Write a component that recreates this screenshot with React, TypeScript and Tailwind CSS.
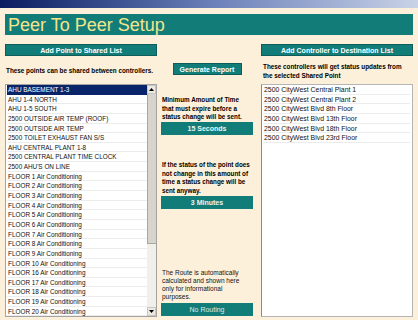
import React from "react";

const leftItems = [
  "AHU BASEMENT 1-3",
  "AHU 1-4 NORTH",
  "AHU 1-5 SOUTH",
  "2500 OUTSIDE AIR TEMP (ROOF)",
  "2500 OUTSIDE AIR TEMP",
  "2500 TOILET EXHAUST FAN S/S",
  "AHU CENTRAL PLANT 1-8",
  "2500 CENTRAL PLANT TIME CLOCK",
  "2500 AHU'S ON LINE",
  "FLOOR 1 Air Conditioning",
  "FLOOR 2 Air Conditioning",
  "FLOOR 3 Air Conditioning",
  "FLOOR 4 Air Conditioning",
  "FLOOR 5 Air Conditioning",
  "FLOOR 6 Air Conditioning",
  "FLOOR 7 Air Conditioning",
  "FLOOR 8 Air Conditioning",
  "FLOOR 9 Air Conditioning",
  "FLOOR 10 Air Conditioning",
  "FLOOR 16 Air Conditioning",
  "FLOOR 17 Air Conditioning",
  "FLOOR 18 Air Conditioning",
  "FLOOR 19 Air Conditioning",
  "FLOOR 20 Air Conditioning",
];

const rightItems = [
  "2500 CityWest Central Plant 1",
  "2500 CityWest Central Plant 2",
  "2500 CityWest Blvd 8th Floor",
  "2500 CityWest Blvd 13th Floor",
  "2500 CityWest Blvd 18th Floor",
  "2500 CityWest Blvd 23rd Floor",
];

function Arrow({ up }: { up: boolean }) {
  return (
    <div className="h-[9px] w-full bg-[#ece9e2] border border-[#c9c6be] flex items-center justify-center">
      <svg width="5" height="3" viewBox="0 0 5 3">
        {up ? <polygon points="0,3 5,3 2.5,0" fill="#000" /> : <polygon points="0,0 5,0 2.5,3" fill="#000" />}
      </svg>
    </div>
  );
}

export default function App() {
  return (
    <div className="w-[418px] h-[320px] overflow-hidden bg-[#fdf0da] font-['Liberation_Sans',Arial,sans-serif]">
      <div className="h-[8px] bg-gradient-to-r from-[#0c1c60] via-[#6a7fb8] to-[#c9d2e6]" />
      <div className="px-[5px]">
        <div className="mt-[6px] h-[21px] bg-[#127c78] flex items-center pl-[3px]">
          <span className="text-[18px] leading-none text-[#f3e58c]">Peer To Peer Setup</span>
        </div>
        <div className="mt-[9px] h-[274px] flex">
          {/* Left column */}
          <div className="w-[152px] flex flex-col">
            <div className="h-[12px] bg-[#127c78] border border-[#0d5e5b] flex items-center justify-center text-white font-bold text-[7px] leading-none">
              Add Point to Shared List
            </div>
            <div className="h-[28px] pt-[11px] pl-[1px] text-[6.35px] leading-[8px] font-bold text-black">
              These points can be shared between controllers.
            </div>
            <div className="h-[233px] bg-white border border-[#a3a3a3] flex overflow-hidden">
              <div className="flex-1 overflow-hidden pl-[1px]">
                {leftItems.map((t, i) => (
                  <div
                    key={t}
                    className={
                      i === 0
                        ? "h-[9.65px] bg-[#0a246a] text-white text-[6.4px] leading-[9px] pl-[1px] whitespace-nowrap"
                        : "h-[9.65px] border-b border-[#ececec] text-[#111] text-[6.4px] leading-[9px] pl-[1px] whitespace-nowrap"
                    }
                  >
                    {t}
                  </div>
                ))}
              </div>
              <div className="w-[9px] flex flex-col bg-[#f1efea]">
                <Arrow up />
                <div className="h-[150px] bg-[#d7d4cd] border-l border-[#a9a69e] border-b border-b-[#a9a69e]" />
                <div className="flex-1" />
                <Arrow up={false} />
              </div>
            </div>
          </div>

          {/* Middle column */}
          <div className="ml-[4px] w-[92px] flex flex-col">
            <div className="mt-[19px] mx-auto w-[69px] h-[12px] bg-[#127c78] border border-[#0d5e5b] flex items-center justify-center text-white font-bold text-[7px] leading-none">
              Generate Report
            </div>
            <div className="mt-[21px] pl-[1px] text-[6.3px] leading-[8.5px] font-bold text-black">
              Minimum Amount of Time
              <br />
              that must expire before a
              <br />
              status change will be sent.
            </div>
            <div className="mt-[0.5px] h-[13px] bg-[#127c78] flex items-center justify-center text-[#eef6f2] font-bold text-[7px] leading-none">
              15 Seconds
            </div>
            <div className="mt-[26px] pl-[1px] text-[6.3px] leading-[8.5px] font-bold text-black">
              If the status of the point does
              <br />
              not change in this amount of
              <br />
              time a status change will be
              <br />
              sent anyway.
            </div>
            <div className="mt-[1px] h-[13px] bg-[#127c78] flex items-center justify-center text-[#eef6f2] font-bold text-[7px] leading-none">
              3 Minutes
            </div>
            <div className="flex-1" />
            <div className="pl-[1px] text-[6.5px] leading-[8px] text-[#111]">
              The Route is automatically
              <br />
              calculated and shown here
              <br />
              only for informational
              <br />
              purposes.
            </div>
            <div className="mt-[2px] mb-[2px] h-[13px] bg-[#127c78] flex items-center justify-center text-[#d9efec] text-[7px] leading-none">
              No Routing
            </div>
          </div>

          {/* Right column */}
          <div className="ml-[8px] w-[152px] flex flex-col">
            <div className="h-[12px] bg-[#127c78] border border-[#0d5e5b] flex items-center justify-center text-white font-bold text-[7px] leading-none">
              Add Controller to Destination List
            </div>
            <div className="h-[28px] pt-[7px] pl-[2px] text-[6.35px] leading-[8.5px] font-bold text-black">
              These controllers will get status updates from
              <br />
              the selected Shared Point
            </div>
            <div className="h-[233px] bg-white border border-[#b5b5b5] border-l-[#8a8a8a] overflow-hidden pl-[1px] pr-[2px]">
              {rightItems.map((t) => (
                <div
                  key={t}
                  className="h-[9.65px] border-b border-[#ececec] text-[#111] text-[6.9px] leading-[9px] pl-[1px] whitespace-nowrap"
                >
                  {t}
                </div>
              ))}
            </div>
          </div>
        </div>
      </div>
    </div>
  );
}
